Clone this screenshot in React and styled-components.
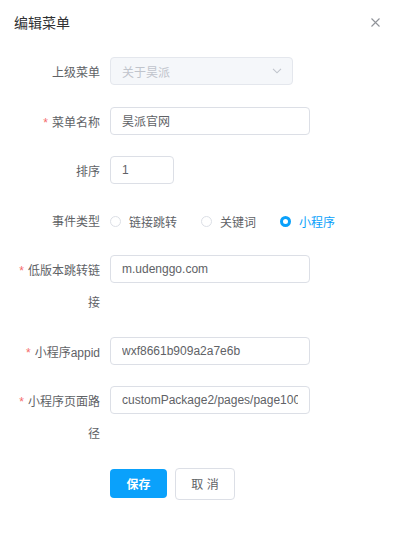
import React from 'react'
import styled, { createGlobalStyle } from 'styled-components'

const GlobalStyle = createGlobalStyle`
  body {
    margin: 0;
    background: #fff;
    font-family: "Liberation Sans", "Noto Sans CJK SC", sans-serif;
  }
`

const BLUE = '#0aa1fb'

const Dialog = styled.div`
  width: 396px;
  height: 539px;
  background: #fff;
`

const Header = styled.div`
  height: 45px;
  display: flex;
  align-items: center;
  justify-content: space-between;
  padding: 0 16px 0 14px;
  box-sizing: border-box;
`

const Title = styled.span`
  font-size: 14px;
  line-height: 20px;
  color: #303133;
`

const Close = styled.button`
  border: 0;
  background: none;
  padding: 0;
  width: 10px;
  height: 10px;
  display: flex;
  align-items: center;
  justify-content: center;
  cursor: pointer;
`

const Form = styled.div`
  padding: 12px 0 0 10px;
`

const Row = styled.div`
  display: grid;
  grid-template-columns: 100px 1fr;
  margin-bottom: 17.5px;
`

const Label = styled.label`
  box-sizing: border-box;
  padding-right: 10px;
  text-align: right;
  font-size: 12px;
  line-height: 32px;
  color: #606266;

  ${p => p.$required && `
    &::before {
      content: '*';
      color: #f56c6c;
      margin-right: 4px;
    }
  `}
`

const Field = styled.div`
  display: flex;
  align-items: flex-start;
`

const Input = styled.input`
  box-sizing: border-box;
  width: ${p => p.$width || 200}px;
  height: 28px;
  padding: 0 11px;
  border: 1px solid #dcdfe6;
  border-radius: 4px;
  font-family: inherit;
  font-size: 12px;
  color: #606266;
  background: #fff;
  outline: none;
`

const Select = styled.div`
  box-sizing: border-box;
  width: 183px;
  height: 28px;
  padding: 0 10px 0 11px;
  border: 1px solid #e4e7ed;
  border-radius: 4px;
  background: #f5f7fa;
  display: flex;
  align-items: center;
  justify-content: space-between;
  font-size: 12px;
  color: #c0c4cc;
`

const RadioGroup = styled.div`
  display: flex;
  align-items: center;
  height: 32px;
`

const Radio = styled.label`
  display: flex;
  align-items: center;
  margin-right: 24px;
  font-size: 12px;
  color: ${p => (p.$checked ? BLUE : '#606266')};
`

const RadioDot = styled.span`
  box-sizing: border-box;
  width: 11px;
  height: 11px;
  border-radius: 50%;
  margin-right: 8px;
  border: ${p => (p.$checked ? `3.5px solid ${BLUE}` : '1px solid #dcdfe6')};
  background: #fff;
`

const Actions = styled.div`
  display: flex;
  align-items: center;
  gap: 8px;
  height: 32px;
`

const Button = styled.button`
  box-sizing: border-box;
  font-family: inherit;
  font-size: 12px;
  border-radius: 4px;
  cursor: pointer;
  padding: 0;
  ${p => p.$primary ? `
    width: 57px;
    height: 29px;
    background: ${BLUE};
    border: 0;
    color: #fff;
    font-weight: bold;
  ` : `
    width: 60px;
    height: 32px;
    background: #fff;
    border: 1px solid #dcdfe6;
    color: #606266;
  `}
`

const radios = ['链接跳转', '关键词', '小程序']

export default function App() {
  return (
    <Dialog>
      <GlobalStyle />
      <Header>
        <Title>编辑菜单</Title>
        <Close aria-label="close">
          <svg width="9" height="9" viewBox="0 0 9 9">
            <path d="M0.5 0.5L8.5 8.5M8.5 0.5L0.5 8.5" stroke="#909399" strokeWidth="1.1" />
          </svg>
        </Close>
      </Header>
      <Form>
        <Row>
          <Label>上级菜单</Label>
          <Field>
            <Select>
              <span>关于昊派</span>
              <svg width="10" height="6" viewBox="0 0 10 6">
                <path d="M1 0.8L5 4.8L9 0.8" fill="none" stroke="#c0c4cc" strokeWidth="1.1" />
              </svg>
            </Select>
          </Field>
        </Row>
        <Row>
          <Label $required>菜单名称</Label>
          <Field><Input readOnly value="昊派官网" /></Field>
        </Row>
        <Row>
          <Label>排序</Label>
          <Field><Input readOnly value="1" $width={64} /></Field>
        </Row>
        <Row>
          <Label>事件类型</Label>
          <RadioGroup>
            {radios.map((r, i) => (
              <Radio key={r} $checked={i === 2}>
                <RadioDot $checked={i === 2} />
                {r}
              </Radio>
            ))}
          </RadioGroup>
        </Row>
        <Row>
          <Label $required>低版本跳转链接</Label>
          <Field><Input readOnly value="m.udenggo.com" /></Field>
        </Row>
        <Row>
          <Label $required>小程序appid</Label>
          <Field><Input readOnly value="wxf8661b909a2a7e6b" /></Field>
        </Row>
        <Row>
          <Label $required>小程序页面路径</Label>
          <Field><Input readOnly value="customPackage2/pages/page100/index" /></Field>
        </Row>
        <Row>
          <span />
          <Actions>
            <Button $primary>保存</Button>
            <Button>取 消</Button>
          </Actions>
        </Row>
      </Form>
    </Dialog>
  )
}
